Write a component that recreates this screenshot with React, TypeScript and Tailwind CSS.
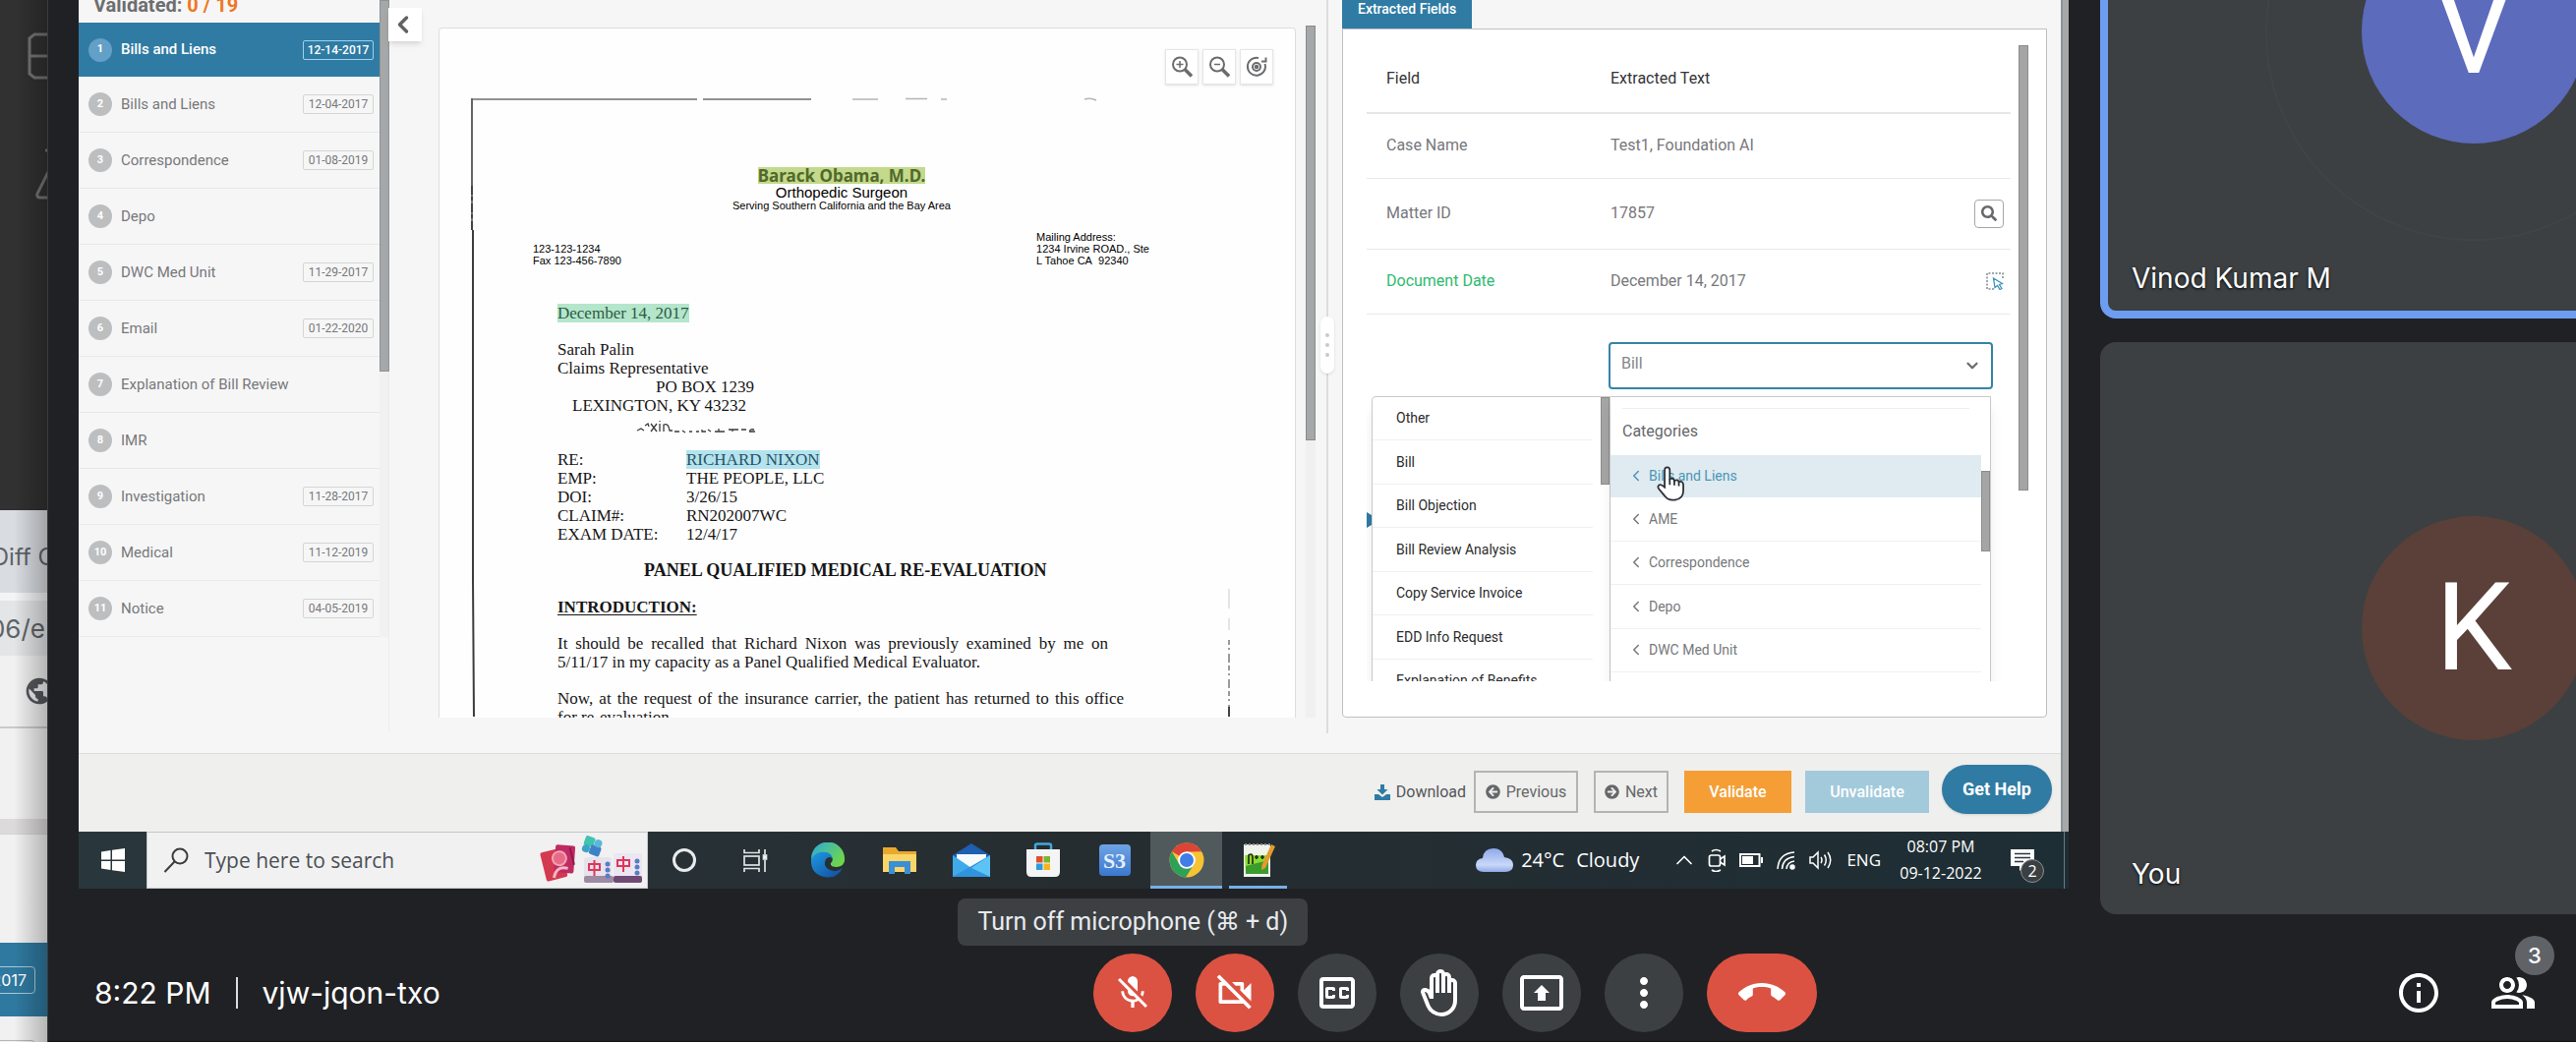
import type { ReactNode } from "react";
import {
  MdMicOff,
  MdOutlineVideocamOff,
  MdOutlineClosedCaption,
  MdOutlineBackHand,
  MdOutlinePresentToAll,
  MdMoreVert,
  MdCallEnd,
  MdOutlineInfo,
  MdOutlinePeopleAlt,
  MdPublic,
} from "react-icons/md";
import { FaArrowCircleLeft, FaArrowCircleRight, FaSearch } from "react-icons/fa";
import { ChevronLeft, ChevronDown, ChevronUp } from "lucide-react";

const documents = [
  { name: "Bills and Liens", date: "12-14-2017" },
  { name: "Bills and Liens", date: "12-04-2017" },
  { name: "Correspondence", date: "01-08-2019" },
  { name: "Depo", date: "" },
  { name: "DWC Med Unit", date: "11-29-2017" },
  { name: "Email", date: "01-22-2020" },
  { name: "Explanation of Bill Review", date: "" },
  { name: "IMR", date: "" },
  { name: "Investigation", date: "11-28-2017" },
  { name: "Medical", date: "11-12-2019" },
  { name: "Notice", date: "04-05-2019" },
];

const subCategories = [
  "Other",
  "Bill",
  "Bill Objection",
  "Bill Review Analysis",
  "Copy Service Invoice",
  "EDD Info Request",
  "Explanation of Benefits",
];

const categories = ["AME", "Correspondence", "Depo", "DWC Med Unit"];

const caseLines = [
  ["RE:", "RICHARD NIXON"],
  ["EMP:", "THE PEOPLE, LLC"],
  ["DOI:", "3/26/15"],
  ["CLAIM#:", "RN202007WC"],
  ["EXAM DATE:", "12/4/17"],
];

/* ---------- window that peeks out behind the call ---------- */

function BackgroundWindow() {
  return (
    <aside className="relative flex w-12 shrink-0 flex-col overflow-hidden bg-[#f1f1f1]">
      <div className="flex h-[519px] shrink-0 flex-col items-end bg-[#313131] pt-[33px]">
        <svg className="h-12 w-5" viewBox="0 0 20 48" fill="none" stroke="#757575" strokeWidth="3">
          <path d="M22 2H7L2 6V42L7 46H22M2 24H22" />
        </svg>
        <svg className="mt-[70px] h-14 w-3" viewBox="0 0 12 56" fill="none" stroke="#757575" strokeWidth="3">
          <path d="M14 2H10M14 22L2 46Q1 50 5 50H14" />
        </svg>
      </div>
      <div className="flex h-[84px] shrink-0 items-center justify-end bg-[#d9dce1] pt-3">
        <span className="-mr-2 whitespace-nowrap font-['Inter',sans-serif] text-2xl text-[#5f6368]">Diff C</span>
      </div>
      <div className="h-2 shrink-0 bg-[#f4f4f4]" />
      <div className="flex h-14 shrink-0 items-center justify-end bg-[#e3e5e7]">
        <span className="mr-[2px] whitespace-nowrap font-['Inter',sans-serif] text-[26px] text-[#5f6368]">06/e</span>
      </div>
      <div className="flex h-[74px] shrink-0 items-center justify-end border-b-2 border-[#c9c9c9]">
        <MdPublic className="-mr-2 size-8 text-[#55585d]" />
      </div>
      <div className="h-[92px] shrink-0" />
      <div className="h-4 shrink-0 border-b border-[#d5d3d3] bg-[#dcdada]" />
      <div className="h-[110px] shrink-0" />
      <div className="flex h-[75px] shrink-0 items-center justify-end bg-[#2f79a0]">
        <span className="mr-3 flex h-7 shrink-0 items-center rounded border border-[#a9cbdc] px-2 font-['Inter',sans-serif] text-base whitespace-nowrap text-white">
          12-14-2017
        </span>
      </div>
      <div className="mt-6 mr-3 -ml-2 h-7 shrink-0 rounded border border-[#b8b8b8]" />
      <div className="absolute inset-0 bg-linear-to-r from-transparent from-30% to-black/25" />
    </aside>
  );
}

/* ---------- document list ---------- */

function DocumentList() {
  return (
    <nav className="relative flex w-[316px] shrink-0">
      <div className="flex min-w-0 flex-1 flex-col">
        <h2 className="h-[23px] text-[20px] leading-[10px] font-bold text-[#6d6e71]">
          <span className="ml-[15px]">Validated: </span>
          <span className="text-[#ef7622]">0 / 19</span>
        </h2>
        <ol>
          {documents.map((doc, i) => (
            <li key={i}>
              <button
                type="button"
                className={
                  i === 0
                    ? "flex h-[55px] w-full items-center bg-[#2f7ba3] pr-1.5 pl-2.5 text-white"
                    : "flex h-[57px] w-full items-center border-b border-[#e8e9ea] pr-1.5 pl-2.5 text-[#77787b]"
                }
              >
                <span
                  className={
                    i === 0
                      ? "flex size-6 items-center justify-center rounded-full bg-[#639fc6] text-[11px] font-bold"
                      : "flex size-6 items-center justify-center rounded-full bg-[#bdbec0] text-[11px] font-bold text-white"
                  }
                >
                  {i + 1}
                </span>
                <span className={i === 0 ? "ml-[9px] text-[15px] font-medium" : "ml-[9px] text-[15px]"}>{doc.name}</span>
                {doc.date && (
                  <span
                    className={
                      i === 0
                        ? "ml-auto flex h-5 w-[72px] items-center justify-center rounded-xs border border-[#9bd3ee] text-xs font-medium"
                        : "ml-auto flex h-5 w-[72px] items-center justify-center rounded-xs border border-[#d4d5d6] text-xs"
                    }
                  >
                    {doc.date}
                  </span>
                )}
              </button>
            </li>
          ))}
        </ol>
      </div>
      <div className="mb-[22px] flex w-2.5 flex-col border-r border-[#ececec]">
        <div className="-mr-px h-[378px] shrink-0 border border-[#8d9496] bg-[#a6a7a8]" />
        <div className="h-[270px] shrink-0 bg-[#f1f1f1]" />
      </div>
      <button
        type="button"
        aria-label="Collapse list"
        className="absolute top-2 left-[315px] z-10 flex h-[34px] w-[34px] items-center justify-center bg-white pr-1 shadow-md"
      >
        <ChevronLeft className="size-7 text-[#606163]" strokeWidth={3} />
      </button>
    </nav>
  );
}

/* ---------- scanned page ---------- */

function ToolButton({ label, children }: { label: string; children: ReactNode }) {
  return (
    <button
      type="button"
      aria-label={label}
      className="flex h-9 w-[34px] items-center justify-center border border-[#e6e6e6] bg-white shadow-sm"
    >
      <svg className="size-6" viewBox="0 0 24 24" fill="none" stroke="#6b6c6e" strokeWidth="2">
        {children}
      </svg>
    </button>
  );
}

function ScannedPage() {
  return (
    <section className="relative mt-7 mb-9 ml-[50px] min-w-0 flex-1 overflow-hidden rounded-t-sm border border-b-0 border-[#dcdddd] bg-[#fefefe]">
      <svg className="absolute top-0 left-0 h-[700px] w-[870px]" viewBox="0 0 870 700" fill="none">
        <path d="M32.500 72H262M268 72H378" stroke="#6d6d6d" strokeWidth="1.500" />
        <path d="M420 72H446M474 71.500H496M510 72H516M656 72Q662 70 668 73" stroke="#b5b5b5" strokeWidth="1.500" />
        <path d="M33 71V160" stroke="#666" strokeWidth="2" />
        <path d="M33 160V205" stroke="#777" strokeWidth="2" />
        <path d="M33 160V205" stroke="#444" strokeWidth="2" strokeDasharray="9 2 4 3" />
        <path d="M34 205V560L35 701" stroke="#3d3d3d" strokeWidth="2" />
        <path d="M803 570V590M803 600V612" stroke="#dddddd" strokeWidth="1.500" />
        <path d="M803 622V701" stroke="#9b9b9b" strokeWidth="2" strokeDasharray="5 3 2 4 9 3" />
        <path d="M803 690V701" stroke="#444" strokeWidth="2" />
      </svg>
      <div className="absolute top-[21px] right-[22px] flex gap-1">
        <ToolButton label="Zoom in">
          <circle cx="10" cy="9.500" r="7" />
          <path d="M15 14.500L22 21.500" strokeWidth="3.500" />
          <path d="M6.500 9.500H13.500M10 6V13" strokeWidth="1.500" />
        </ToolButton>
        <ToolButton label="Zoom out">
          <circle cx="10" cy="9.500" r="7" />
          <path d="M15 14.500L22 21.500" strokeWidth="3.500" />
          <path d="M7 9.500H13" strokeWidth="1.500" />
        </ToolButton>
        <ToolButton label="Reset view">
          <path d="M14 3A9 9 0 1 0 20.500 9" />
          <path d="M17 6.500H21.500V2.500" />
          <circle cx="12" cy="12" r="4" />
          <circle cx="12" cy="12" r="1.300" fill="#6b6c6e" />
        </ToolButton>
      </div>

      <article className="pt-[141px] font-['Liberation_Serif',serif] text-[17px] leading-[19px] text-[#161616]">
        <header className="mr-[52px] flex flex-col items-center font-['Liberation_Sans',sans-serif] text-black">
          <h1 className="bg-[#c3d98c] font-['Noto_Sans',sans-serif] text-[17px] leading-[17px] font-bold text-[#52692a]">
            Barack Obama, M.D.
          </h1>
          <p className="text-[15px] leading-[17px]">Orthopedic Surgeon</p>
          <p className="text-[11px] leading-[11px]">Serving Southern California and the Bay Area</p>
        </header>
        <div className="mt-5 flex items-end justify-between pr-[148px] pl-[95px] font-['Liberation_Sans',sans-serif] text-[11px] leading-[12px] text-black">
          <p>
            123-123-1234
            <br />
            Fax 123-456-7890
          </p>
          <p>
            Mailing Address:
            <br />
            1234 Irvine ROAD., Ste
            <br />
            L Tahoe CA&nbsp; 92340
          </p>
        </div>
        <div className="pr-[174px] pl-[120px]">
          <p className="mt-[38px]">
            <span className="bg-[#b4e6cb] text-[#2c5a45]">December 14, 2017</span>
          </p>
          <p className="mt-[18px]">Sarah Palin</p>
          <p>Claims Representative</p>
          <p className="pl-[100px]">PO BOX 1239</p>
          <p className="pl-[15px]">LEXINGTON, KY 43232</p>
          <svg className="mt-1 ml-20 h-4 w-[122px]" viewBox="0 0 122 16" fill="none" stroke="#3a3a3a" strokeWidth="1.300">
            <path d="M1 12L5 10L8 12M9 7L12 5L13 8M15 5L21 13M21 5L15 13M24 5V13M24 2V3M28 13V6Q33 4 34 12H37M39 13H44M47 12L50 14M54 13H57M61 13H64M67 11V13H71M73 11L76 13M80 13H90M84 10V13M94 11H104M98 11V13M107 11H112M116 13Q115 10 120 11M115 13H121" />
          </svg>
          <table className="mt-4">
            <tbody>
              {caseLines.map(([label, value], i) => (
                <tr key={label}>
                  <th scope="row" className="w-[131px] p-0 text-left font-normal">
                    {label}
                  </th>
                  <td className="p-0">
                    {i === 0 ? <span className="bg-[#b3e3ef] text-[#28525f]">{value}</span> : value}
                  </td>
                </tr>
              ))}
            </tbody>
          </table>
          <h2 className="mt-[18px] pl-[88px] text-lg leading-[19px] font-bold whitespace-nowrap">
            PANEL QUALIFIED MEDICAL RE-EVALUATION
          </h2>
          <h3 className="mt-[18px] font-bold underline underline-offset-2">INTRODUCTION:</h3>
          <p className="mt-[18px] mr-4 text-justify">
            It should be recalled that Richard Nixon was previously examined by me on 5/11/17 in my capacity as a Panel
            Qualified Medical Evaluator.
          </p>
          <p className="mt-[18px]">
            <span className="block [text-align-last:justify]">
              Now, at the request of the insurance carrier, the patient has returned to this office
            </span>
            <span className="block">for re-evaluation.</span>
          </p>
        </div>
      </article>
    </section>
  );
}

/* ---------- extracted fields ---------- */

function CategoryMenus() {
  return (
    <div className="absolute top-[83px] left-[5px] z-10 flex h-[400px] w-[630px]">
      <div className="flex w-[243px] rounded-tl-sm border border-[#c9c9c9] bg-white shadow-lg">
        <ul className="min-w-0 flex-1 pr-2 text-[#2c2c2c]">
          {subCategories.map((name) => (
            <li key={name} className="h-11 border-b border-[#f0f0f0] even:h-[45px]">
              <button type="button" className="block h-full w-full pl-6 text-left text-sm whitespace-nowrap">
                {name}
              </button>
            </li>
          ))}
        </ul>
        <div className="h-[89px] w-[9px] shrink-0 border border-[#8c8c8c] bg-[#a5a5a5]" />
      </div>
      <div className="flex flex-1 border-t border-r border-[#c9c9c9] bg-white shadow-lg">
        <div className="min-w-0 flex-1 pt-[11px]">
          <h4 className="mx-3 h-[48px] border-t border-[#efefef] text-base leading-[46px] text-[#66676a]">Categories</h4>
          <ul className="text-sm text-[#77787b]">
            <li>
              <button type="button" className="flex h-[43px] w-full items-center bg-[#dfebf0] pl-[17px] text-[#4a95b8]">
                <ChevronLeft className="mr-1 size-[18px]" />
                Bills and Liens
              </button>
            </li>
            {categories.map((name) => (
              <li key={name} className="h-[45px] border-b border-[#f0f0f0] odd:h-11">
                <button type="button" className="flex h-full w-full items-center pl-[17px]">
                  <ChevronLeft className="mr-1 size-[18px]" />
                  {name}
                </button>
              </li>
            ))}
          </ul>
        </div>
        <div className="mt-[75px] h-[82px] w-[9px] shrink-0 border border-[#8c8c8c] bg-[#a5a5a5]" />
      </div>
      <svg className="absolute top-[70px] left-[288px] h-[38px] w-8" viewBox="0 0 26 32" fill="white" stroke="#2b2f36" strokeWidth="1.500">
        <path d="M8 19V4.500Q8 2 10.200 2T12.400 4.500V12L14 11.500Q16 11.500 16.300 13.500Q19.500 12 20.200 14.500Q23.600 13.500 24 17V22Q24 29 16.500 30Q11 30.500 8.500 27L3 20.500Q1.500 18 3.500 17Q5 16.300 8 19Z" />
        <path d="M12.400 12V17M16.300 13.500V17.500M20.200 14.500V18" />
      </svg>
    </div>
  );
}

function ExtractedFields() {
  const label = "p-0 pl-5 text-left font-normal";
  return (
    <section className="mr-[14px] flex w-[717px] shrink-0 flex-col pb-9">
      <div className="flex h-[29px] shrink-0">
        <button type="button" className="h-full bg-[#2f7ba3] px-4 pb-2.5 text-sm leading-[17px] font-medium text-white">
          Extracted Fields
        </button>
      </div>
      <div className="flex min-h-0 flex-1 rounded-b-sm border border-[#bfc0c1] bg-white pt-4 pr-[18px] pb-9 pl-6">
        <div className="relative min-w-0 flex-1 overflow-hidden pr-2">
          <table className="w-full table-fixed text-base">
            <thead className="text-[#333436]">
              <tr className="h-[69px] border-b-2 border-[#e6e6e6]">
                <th scope="col" className="w-[248px] p-0 pl-5 text-left font-normal">
                  Field
                </th>
                <th scope="col" className="p-0 text-left font-normal">
                  Extracted Text
                </th>
                <td className="w-16" />
              </tr>
            </thead>
            <tbody className="text-[#77787b]">
              <tr className="h-[66px] border-b border-[#e9e9e9]">
                <th scope="row" className={label}>
                  Case Name
                </th>
                <td className="p-0">Test1, Foundation AI</td>
                <td />
              </tr>
              <tr className="h-[72px] border-b border-[#e9e9e9]">
                <th scope="row" className={label}>
                  Matter ID
                </th>
                <td className="p-0">17857</td>
                <td className="pr-[7px]">
                  <button
                    type="button"
                    aria-label="Search matter"
                    className="ml-auto flex h-[29px] w-[30px] items-center justify-center rounded-sm border border-[#a7a7a7]"
                  >
                    <FaSearch className="size-4 text-[#66686b]" />
                  </button>
                </td>
              </tr>
              <tr className="h-[66px] border-b border-[#e9e9e9]">
                <th scope="row" className="p-0 pl-5 text-left font-normal text-[#2fba6f]">
                  Document Date
                </th>
                <td className="p-0">December 14, 2017</td>
                <td className="pr-[7px]">
                  <button type="button" aria-label="Select on page" className="ml-auto block size-[18px]">
                    <svg viewBox="0 0 18 18" fill="none">
                      <path d="M8 17H1V1H17V6" stroke="#7c8a94" strokeWidth="1.500" strokeDasharray="2 1.500" />
                      <path d="M7.500 6L16.500 11.500L13.500 12.500L16 16.500L14 17.500L11.500 13.500L9 15.500Z" stroke="#3d95bd" strokeWidth="1.300" fill="white" />
                    </svg>
                  </button>
                </td>
              </tr>
            </tbody>
          </table>
          <div className="relative pt-7 pr-[18px] pl-[246px]">
            <select
              aria-label="Document category"
              defaultValue="Bill"
              className="block h-12 w-full appearance-none rounded-sm border-2 border-[#3683a8] bg-white pb-1 pl-[11px] text-base text-[#85868a]"
            >
              <option>Bill</option>
            </select>
            <ChevronDown className="pointer-events-none absolute top-[43px] right-[30px] size-[18px] text-[#6b6c6e]" strokeWidth={3} />
            <svg className="absolute top-[201px] left-0 h-4 w-[5px] text-[#2f7ba3]" viewBox="0 0 5 16">
              <path d="M0 0L5 3V13L0 16Z" fill="currentColor" />
            </svg>
            <CategoryMenus />
          </div>
        </div>
        <div className="h-[453px] w-2.5 shrink-0 border border-[#8c8c8c] bg-[#a5a5a5]" />
      </div>
    </section>
  );
}

function ActionBar() {
  return (
    <footer className="flex h-20 shrink-0 items-center border-t border-[#dcdedd] bg-[#efefed] pr-[9px] pb-0.5 text-base text-[#66676a]">
      <a href="#download" className="ml-auto flex items-center gap-1.5 text-[#55565a]">
        <svg className="h-4 w-4" viewBox="0 0 16 16">
          <path d="M6 0H10V5H13.500L8 10.500L2.500 5H6ZM0 10H4L8 13L12 10H16V16H0Z" fill="#2f7ba3" />
        </svg>
        Download
      </a>
      <button type="button" className="ml-2 flex h-[43px] w-[106px] items-center justify-center gap-1.5 border-2 border-[#b3b4b5]">
        <FaArrowCircleLeft className="size-[15px]" />
        Previous
      </button>
      <button type="button" className="ml-4 flex h-[43px] w-[76px] items-center justify-center gap-1.5 border-2 border-[#b3b4b5]">
        <FaArrowCircleRight className="size-[15px]" />
        Next
      </button>
      <button type="button" className="ml-4 h-[43px] w-[109px] bg-[#f49e35] font-medium text-white">
        Validate
      </button>
      <button type="button" className="ml-[14px] h-[43px] w-[126px] bg-[#a3cadb] font-medium text-white">
        Unvalidate
      </button>
      <button type="button" className="mb-1.5 ml-[13px] h-[50px] w-28 rounded-full bg-[#2f7ba3] text-lg font-bold text-white shadow">
        Get Help
      </button>
    </footer>
  );
}

/* ---------- Windows taskbar ---------- */

function TaskCell({ label, active, children }: { label: string; active?: "focused" | "open"; children: ReactNode }) {
  return (
    <button
      type="button"
      aria-label={label}
      className={
        active === "focused"
          ? "flex h-full w-[73px] items-center justify-center border-b-[3px] border-[#76b0e8] bg-[#50595c] pt-[3px]"
          : active === "open"
            ? "mx-[7px] flex h-full w-[59px] items-center justify-center border-b-[3px] border-[#76b0e8] pt-[3px]"
            : "flex h-full w-[73px] items-center justify-center"
      }
    >
      {children}
    </button>
  );
}

function SearchArt() {
  return (
    <svg className="mr-0.5 ml-auto h-[50px] w-[108px]" viewBox="0 0 108 50">
      <g transform="rotate(-14 18 28)">
        <rect x="4" y="14" width="22" height="30" rx="2" fill="#d33a50" />
        <rect x="17" y="12" width="20" height="28" rx="2" fill="#c02a62" transform="rotate(18 27 26)" />
        <circle cx="22" cy="24" r="7" fill="#e76a86" />
        <circle cx="22" cy="24" r="7" fill="none" stroke="#f3a3b6" strokeWidth="2" />
        <path d="M12 42Q17 30 28 36" fill="none" stroke="#f2b8c3" strokeWidth="3" />
        <path d="M35 16V34" stroke="#8e1a4d" strokeWidth="2" />
      </g>
      <g transform="rotate(20 54 11)">
        <rect x="45" y="2" width="10" height="10" rx="2" fill="#3fc4b0" />
        <rect x="53" y="9" width="11" height="10" rx="2" fill="#3d82c9" />
        <circle cx="59" cy="6" r="4" fill="#5cb7d6" />
        <circle cx="49" cy="15" r="4" fill="#3fa3c4" />
      </g>
      <rect x="46" y="22" width="28" height="24" rx="3" fill="#e6e3ec" />
      <rect x="46" y="41" width="30" height="7" rx="2" fill="#9c8ba3" />
      <rect x="76" y="18" width="29" height="26" rx="3" fill="#ebe6f1" />
      <rect x="76" y="41" width="29" height="7" rx="2" fill="#6f4a74" />
      <path d="M51 29H62V35H51ZM56.500 25V41M80 25H92V31H80ZM86 21V37" fill="none" stroke="#e0365b" strokeWidth="2" />
      <g fill="#5a7cc4">
        <circle cx="70" cy="29" r="2.500" />
        <circle cx="70" cy="35" r="2.500" />
        <circle cx="70" cy="41" r="2.500" />
        <circle cx="100" cy="26" r="2.500" />
        <circle cx="100" cy="32" r="2.500" />
        <circle cx="100" cy="38" r="2.500" />
      </g>
    </svg>
  );
}

function Taskbar() {
  return (
    <div className="flex h-[58px] shrink-0 items-center bg-linear-to-r from-[#29373c] via-[#262d31] to-[#1e2e35] font-['Open_Sans',sans-serif] text-white">
      <button type="button" aria-label="Start" className="flex h-full w-[69px] shrink-0 items-center justify-center">
        <svg className="h-6 w-6" viewBox="0 0 24 24" fill="white">
          <path d="M0 3.500L9.500 2V11.500H0ZM11 1.800L24 0V11.500H11ZM0 13H9.500V22L0 20.500ZM11 13H24V24L11 22.200Z" />
        </svg>
      </button>
      <label className="flex h-full w-[510px] shrink-0 items-center border border-[#c5c7c7] bg-[#f1f1f1] pl-4">
        <svg className="size-7 shrink-0" viewBox="0 0 28 28" fill="none" stroke="#3c3c3c" strokeWidth="2">
          <circle cx="17" cy="10" r="7.500" />
          <path d="M11.500 15.500L1.500 26" />
        </svg>
        <input
          type="text"
          aria-label="Search Windows"
          placeholder="Type here to search"
          className="ml-[14px] min-w-0 flex-1 bg-transparent pt-0.5 text-[21px] text-[#3f4347] outline-none placeholder:text-[#4a4f54]"
        />
        <SearchArt />
      </label>
      <div className="flex h-full items-center">
        <TaskCell label="Cortana">
          <span className="size-6 rounded-full border-[3px] border-[#e8ebec]" />
        </TaskCell>
        <TaskCell label="Task view">
          <svg className="h-[23px] w-[25px]" viewBox="0 0 25 23" fill="none" stroke="#dfe4e6" strokeWidth="1.700">
            <path d="M1 0V3.500H16V0M1 23V19.500H16V23M22 0V5M22 11V23" />
            <rect x="1" y="7" width="15" height="9" />
            <rect x="20.500" y="6" width="3" height="4" fill="#fff" />
          </svg>
        </TaskCell>
        <TaskCell label="Edge">
          <svg className="size-9" viewBox="0 0 36 36">
            <defs>
              <linearGradient id="edgeTop" x1="0" y1="0" x2="1" y2="0.600">
                <stop offset="0" stopColor="#2aa8e0" />
                <stop offset="1" stopColor="#6fd64a" />
              </linearGradient>
              <linearGradient id="edgeLow" x1="0" y1="0" x2="1" y2="1">
                <stop offset="0" stopColor="#1e9be2" />
                <stop offset="1" stopColor="#124a9c" />
              </linearGradient>
            </defs>
            <path d="M1 17A17 17 0 0 1 35 16Q36 24 27 25Q20 25 21 21Q24 18 22 15Q15 8 1 17Z" fill="url(#edgeTop)" />
            <path d="M1 17Q6 8 16 10Q22 11 23 17Q20 13 16 17Q12 24 20 28Q27 31 33 26Q28 36 18 35.500Q0 34 1 17Z" fill="url(#edgeLow)" />
          </svg>
        </TaskCell>
        <TaskCell label="File Explorer">
          <svg className="h-[28px] w-[34px]" viewBox="0 0 34 28">
            <path d="M0 1H13L16 5H34V26H0Z" fill="#e8a92e" />
            <path d="M0 8H34V26H0Z" fill="#fbd568" />
            <path d="M6 15H28V28H22V21H12V28H6Z" fill="#3b8fd4" />
          </svg>
        </TaskCell>
        <TaskCell label="Mail">
          <svg className="h-[34px] w-[38px]" viewBox="0 0 38 34">
            <path d="M0 12L19 0L38 12V34H0Z" fill="#1d5fb0" />
            <path d="M4 11H34V24H4Z" fill="#f5fafd" />
            <path d="M0 12L19 25L0 34Z" fill="#3fa9ea" />
            <path d="M38 12V34H0Z" fill="#2f93de" />
            <path d="M38 12L19 25L38 34Z" fill="#5cc3f5" />
          </svg>
        </TaskCell>
        <TaskCell label="Microsoft Store">
          <svg className="h-9 w-[34px]" viewBox="0 0 34 36">
            <path d="M9 9V3Q9 1.500 11 1.500H23Q25 1.500 25 3V9" fill="none" stroke="#3fa9dd" strokeWidth="2.500" />
            <path d="M0 7H34V30Q34 35 29 35H5Q0 35 0 30Z" fill="#f4f4f4" />
            <path d="M10 14H16.500V20.500H10Z" fill="#e0522b" />
            <path d="M17.500 14H24V20.500H17.500Z" fill="#7fb52e" />
            <path d="M10 21.500H16.500V28H10Z" fill="#2a9de0" />
            <path d="M17.500 21.500H24V28H17.500Z" fill="#f5b31e" />
          </svg>
        </TaskCell>
        <TaskCell label="S3 Browser">
          <span className="flex size-8 items-center justify-center rounded-sm bg-linear-to-b from-[#6fa3e4] to-[#3a78cf] font-['Liberation_Serif',serif] text-[22px] font-bold text-[#e6f0fb]">
            S3
          </span>
        </TaskCell>
        <TaskCell label="Chrome" active="focused">
          <svg className="size-9" viewBox="0 0 36 36">
            <circle cx="18" cy="18" r="17.500" fill="#f6c433" />
            <path d="M18 18L2.800 9.300A17.500 17.500 0 0 1 33.200 9.300L18 9.500Z" fill="#db4437" />
            <path d="M2.800 9.300A17.500 17.500 0 0 0 17 35.500L25.500 22L18 18L10.500 22.300Z" fill="#2fa05a" />
            <circle cx="18" cy="18" r="8.800" fill="#fff" />
            <circle cx="18" cy="18" r="7" fill="#3f7de8" />
          </svg>
        </TaskCell>
        <TaskCell label="Notepad++" active="open">
          <svg className="h-9 w-[34px]" viewBox="0 0 34 36">
            <rect x="2" y="2" width="27" height="33" fill="#f0f3ec" />
            <path d="M3 13L27 13V32H4Z" fill="#8edb2e" />
            <path d="M4 24L27 18V32H4Z" fill="#3a9c2d" />
            <path d="M7 22V13Q11 10 11 16V22M13 15H17M15 13V17M19 15H23M21 13V17" fill="none" stroke="#1f3313" strokeWidth="1.700" />
            <path d="M3 2H29" stroke="#8a8a8a" strokeWidth="2" strokeDasharray="2 2" />
            <path d="M30 2L34 4L24 26L20 28L20.500 23Z" fill="#e59a2c" />
          </svg>
        </TaskCell>
      </div>
      <div className="ml-auto flex h-full items-center text-xl">
        <svg className="h-6 w-[38px]" viewBox="0 0 38 24">
          <defs>
            <linearGradient id="cloud" x1="0" y1="0" x2="0" y2="1">
              <stop offset="0" stopColor="#8fa8ea" />
              <stop offset="0.700" stopColor="#c9d8f8" />
              <stop offset="1" stopColor="#8ea9e6" />
            </linearGradient>
          </defs>
          <path d="M8 24Q0 24 0 17Q0 11 7 10Q8 0 18 0Q27 0 29 9Q38 10 38 17Q38 24 30 24Z" fill="url(#cloud)" />
        </svg>
        <span className="ml-2">24°C</span>
        <span className="ml-3">Cloudy</span>
        <div className="ml-8 flex items-center gap-3.5">
          <ChevronUp className="size-7" strokeWidth={1.500} />
          <svg className="-ml-1 h-6 w-[18px]" viewBox="0 0 18 24" fill="none" stroke="white" strokeWidth="1.700">
            <rect x="1.500" y="7" width="11" height="11" rx="2" />
            <path d="M12.500 11L17 8V17L12.500 14M4 3Q8 0 13 3M4 22Q8 25 13 22" />
          </svg>
          <svg className="h-[14px] w-6" viewBox="0 0 24 14" fill="none" stroke="white" strokeWidth="2">
            <path d="M1 1H20.500V13H1Z" />
            <path d="M4 4H13V10H4Z" fill="white" />
            <path d="M23 4V10" />
          </svg>
          <svg className="size-[19px]" viewBox="0 0 19 19" fill="none" stroke="white" strokeWidth="1.500">
            <path d="M1 18Q2 2 18 1M5.500 18Q6 7 18 5.500M10 18Q10.500 11 18 10" />
            <circle cx="16" cy="16" r="2" fill="white" />
          </svg>
          <svg className="h-5 w-6" viewBox="0 0 24 20" fill="none" stroke="white" strokeWidth="1.500">
            <path d="M1 7H4L9 2V18L4 13H1ZM12 7Q14 10 12 13M15.500 4.500Q19 10 15.500 15.500M19 2Q24.500 10 19 18" />
          </svg>
          <span className="text-[17px]">ENG</span>
        </div>
        <div className="ml-3.5 w-[94px] text-center text-base leading-[27px] whitespace-nowrap">
          08:07 PM
          <br />
          09-12-2022
        </div>
        <button type="button" aria-label="Notifications" className="relative mr-[30px] ml-6 block h-[22px] w-6">
          <svg viewBox="0 0 24 22" className="h-[22px] w-6">
            <path d="M0 0H24V17H14L9 22V17H0Z" fill="white" />
            <path d="M4 4.500H20M4 8.500H20M4 12.500H13" stroke="#2a363c" strokeWidth="1.500" />
          </svg>
          <span className="absolute top-2.5 left-2.5 flex size-6 items-center justify-center rounded-full border border-[#8b9194] bg-[#3b3f42] text-base leading-none">
            2
          </span>
        </button>
        <div className="h-full w-[5px] border-l border-[#6f7b80]" />
      </div>
    </div>
  );
}

function SharedScreen() {
  return (
    <section className="mb-[26px] flex min-w-0 flex-1 flex-col overflow-hidden bg-[#f6f6f6] font-['Roboto',sans-serif]">
      <div className="flex min-h-0 flex-1">
        <div className="flex min-w-0 flex-1 flex-col">
          <div className="flex min-h-0 flex-1">
            <DocumentList />
            <ScannedPage />
            <div className="mt-[26px] mb-9 ml-2.5 w-2.5 shrink-0 bg-[#f0f0f0]">
              <div className="h-[422px] border border-[#868c90] bg-[#a6a7a8]" />
            </div>
            <div className="relative mr-[14px] mb-5 ml-[11px] w-[2px] shrink-0 bg-[#dddddd]">
              <div className="absolute top-[322px] -left-1.5 flex h-[58px] w-[14px] flex-col items-center justify-center gap-1.5 rounded-full bg-white shadow">
                <i className="size-1 rounded-full bg-[#c9c9c9]" />
                <i className="size-1 rounded-full bg-[#c9c9c9]" />
                <i className="size-1 rounded-full bg-[#c9c9c9]" />
              </div>
            </div>
            <ExtractedFields />
          </div>
          <ActionBar />
        </div>
        <div className="w-2 shrink-0 border-l-2 border-[#88949b] bg-[#a8a8a8]" />
      </div>
      <Taskbar />
    </section>
  );
}

/* ---------- meeting chrome ---------- */

function Participants() {
  return (
    <aside className="flex w-[484px] shrink-0 flex-col gap-6 overflow-hidden font-['Inter',sans-serif] text-[28px] text-white">
      <div className="relative h-[324px] w-[760px] shrink-0 overflow-hidden rounded-b-2xl border-8 border-t-0 border-[#6d9df1] bg-[#3c4043]">
        <div className="absolute -top-[179px] left-[160px] size-[424px] rounded-full border-2 border-[#414447]" />
        <div className="absolute -top-[82px] left-[258px] flex size-[228px] items-center justify-center rounded-full bg-[#5c6bbc] font-['Roboto',sans-serif] text-[124px] leading-none">
          V
        </div>
        <p className="absolute bottom-3 left-6 [text-shadow:0_1px_3px_#000]">Vinod Kumar M</p>
      </div>
      <div className="relative flex min-h-0 w-[760px] flex-1 items-center justify-center rounded-2xl bg-[#3c4043]">
        <div className="flex size-[228px] items-center justify-center rounded-full bg-[#5a4038] font-['Roboto',sans-serif] text-[124px] leading-none">
          K
        </div>
        <p className="absolute bottom-5 left-8 [text-shadow:0_1px_3px_#000]">You</p>
      </div>
    </aside>
  );
}

function CallButton({ label, tone, children }: { label: string; tone: "red" | "grey"; children: ReactNode }) {
  return (
    <button
      type="button"
      aria-label={label}
      className={
        tone === "red"
          ? "flex size-20 items-center justify-center rounded-full bg-[#db5242]"
          : "flex size-20 items-center justify-center rounded-full bg-[#3c4043]"
      }
    >
      {children}
    </button>
  );
}

function CallBar() {
  return (
    <footer className="flex h-[130px] shrink-0 items-center border-b border-[#140f14] pt-[31px] pr-[22px] pl-[47px] text-white">
      <div className="flex flex-[25] items-center font-['Inter',sans-serif] text-[30px] whitespace-nowrap">
        <span>8:22 PM</span>
        <span className="mx-[25px] h-8 w-[2px] bg-[#dadce0]" />
        <span>vjw-jqon-txo</span>
      </div>
      <div className="flex gap-6">
        <div className="relative">
          <CallButton label="Turn off microphone" tone="red">
            <MdMicOff className="size-10" />
          </CallButton>
          <div
            role="tooltip"
            className="absolute bottom-[88px] left-1/2 flex h-12 w-[356px] -translate-x-1/2 items-center justify-center rounded-lg bg-[#3c4043] font-['Roboto',sans-serif] text-[25px] whitespace-nowrap text-[#e8eaed]"
          >
            Turn off microphone (⌘ + d)
          </div>
        </div>
        <CallButton label="Turn on camera" tone="red">
          <MdOutlineVideocamOff className="size-11" />
        </CallButton>
        <CallButton label="Turn on captions" tone="grey">
          <MdOutlineClosedCaption className="size-12" />
        </CallButton>
        <CallButton label="Raise hand" tone="grey">
          <MdOutlineBackHand className="size-12" />
        </CallButton>
        <CallButton label="Present now" tone="grey">
          <MdOutlinePresentToAll className="size-12" />
        </CallButton>
        <CallButton label="More options" tone="grey">
          <MdMoreVert className="size-12" />
        </CallButton>
        <button
          type="button"
          aria-label="Leave call"
          className="flex h-20 w-28 items-center justify-center rounded-full bg-[#db5242]"
        >
          <MdCallEnd className="size-12" />
        </button>
      </div>
      <div className="flex flex-[18] items-center justify-end gap-12 pr-[18px]">
        <button type="button" aria-label="Meeting details">
          <MdOutlineInfo className="size-12" />
        </button>
        <button type="button" aria-label="Show everyone" className="relative">
          <MdOutlinePeopleAlt className="size-12" />
          <span className="absolute -top-[34px] left-[26px] flex size-10 items-center justify-center rounded-full bg-[#5f6368] font-['Inter',sans-serif] text-[22px] leading-none font-medium">
            3
          </span>
        </button>
      </div>
    </footer>
  );
}

export default function App() {
  return (
    <div className="flex h-screen w-full overflow-hidden bg-[#202124]">
      <BackgroundWindow />
      <main className="flex min-w-0 flex-1 flex-col border-l border-[#3a3a3c]">
        <div className="flex min-h-0 flex-1 gap-8 pl-[31px]">
          <SharedScreen />
          <Participants />
        </div>
        <CallBar />
      </main>
    </div>
  );
}
